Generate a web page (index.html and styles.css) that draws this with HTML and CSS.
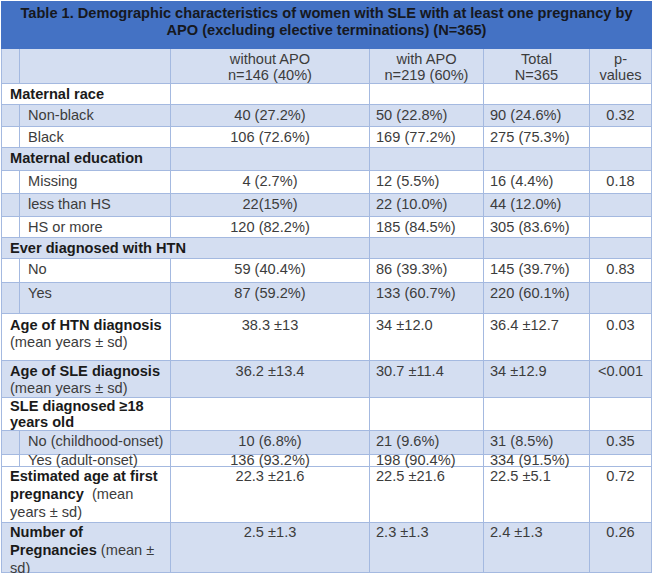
FILE: index.html
```html
<!DOCTYPE html>
<html>
<head>
<meta charset="utf-8">
<link rel="stylesheet" href="styles.css">
</head>
<body>
<div class="page">
<table class="demo">
  <colgroup>
    <col class="c-ind"><col class="c-lab"><col class="c-wo"><col class="c-with"><col class="c-tot"><col class="c-p">
  </colgroup>
  <tr class="r-title">
    <td colspan="6" class="title">Table 1. Demographic characteristics of women with SLE with at least one pregnancy by<br>APO (excluding elective terminations) (N=365)</td>
  </tr>
  <tr class="alt r-head">
    <td></td><td></td>
    <td class="ctr">without APO<br>n=146 (40%)</td>
    <td class="ctr">with APO<br>n=219 (60%)</td>
    <td class="ctr">Total<br>N=365</td>
    <td class="ctr">p-<br>values</td>
  </tr>
  <tr class="h21">
    <td colspan="2" class="cat">Maternal race</td><td></td><td></td><td></td><td></td>
  </tr>
  <tr class="alt h22">
    <td></td><td class="sub">Non-black</td><td class="ctr">40 (27.2%)</td><td class="lft">50 (22.8%)</td><td class="lft">90 (24.6%)</td><td class="ctr">0.32</td>
  </tr>
  <tr class="h21">
    <td></td><td class="sub">Black</td><td class="ctr">106 (72.6%)</td><td class="lft">169 (77.2%)</td><td class="lft">275 (75.3%)</td><td></td>
  </tr>
  <tr class="alt h23">
    <td colspan="2" class="cat">Maternal education</td><td></td><td></td><td></td><td></td>
  </tr>
  <tr class="h23">
    <td></td><td class="sub">Missing</td><td class="ctr">4 (2.7%)</td><td class="lft">12 (5.5%)</td><td class="lft">16 (4.4%)</td><td class="ctr">0.18</td>
  </tr>
  <tr class="alt h23">
    <td></td><td class="sub">less than HS</td><td class="ctr">22(15%)</td><td class="lft">22 (10.0%)</td><td class="lft">44 (12.0%)</td><td></td>
  </tr>
  <tr class="h21">
    <td></td><td class="sub">HS or more</td><td class="ctr">120 (82.2%)</td><td class="lft">185 (84.5%)</td><td class="lft">305 (83.6%)</td><td></td>
  </tr>
  <tr class="alt h21">
    <td colspan="3" class="cat">Ever diagnosed with HTN</td><td></td><td></td><td></td>
  </tr>
  <tr class="h24">
    <td></td><td class="sub">No</td><td class="ctr">59 (40.4%)</td><td class="lft">86 (39.3%)</td><td class="lft">145 (39.7%)</td><td class="ctr">0.83</td>
  </tr>
  <tr class="alt h31">
    <td></td><td class="sub">Yes</td><td class="ctr">87 (59.2%)</td><td class="lft">133 (60.7%)</td><td class="lft">220 (60.1%)</td><td></td>
  </tr>
  <tr class="h47 pad3">
    <td colspan="2" class="cat"><b>Age of HTN diagnosis</b><br><span class="norm">(mean years ± sd)</span></td><td class="ctr">38.3 ±13</td><td class="lft">34 ±12.0</td><td class="lft">36.4 ±12.7</td><td class="ctr">0.03</td>
  </tr>
  <tr class="alt h35">
    <td colspan="2" class="cat"><b>Age of SLE diagnosis</b><br><span class="norm">(mean years ± sd)</span></td><td class="ctr">36.2 ±13.4</td><td class="lft">30.7 ±11.4</td><td class="lft">34 ±12.9</td><td class="ctr">&lt;0.001</td>
  </tr>
  <tr class="h32 pad1">
    <td colspan="2" class="cat">SLE diagnosed ≥18<br>years old</td><td></td><td></td><td></td><td></td>
  </tr>
  <tr class="alt h24">
    <td></td><td class="sub">No (childhood-onset)</td><td class="ctr">10 (6.8%)</td><td class="lft">21 (9.6%)</td><td class="lft">31 (8.5%)</td><td class="ctr">0.35</td>
  </tr>
  <tr class="h11 tight">
    <td></td><td class="sub">Yes (adult-onset)</td><td class="ctr">136 (93.2%)</td><td class="lft">198 (90.4%)</td><td class="lft">334 (91.5%)</td><td></td>
  </tr>
  <tr class="h56 loose">
    <td colspan="2" class="cat"><b>Estimated age at first pregnancy</b> <span class="norm">&nbsp;(mean years ± sd)</span></td><td class="ctr">22.3 ±21.6</td><td class="lft">22.5 ±21.6</td><td class="lft">22.5 ±5.1</td><td class="ctr">0.72</td>
  </tr>
  <tr class="alt h50 mid">
    <td colspan="2" class="cat"><div class="ovf"><b>Number of Pregnancies</b> <span class="norm">(mean ± sd)</span></div></td><td class="ctr">2.5 ±1.3</td><td class="lft">2.3 ±1.3</td><td class="lft">2.4 ±1.3</td><td class="ctr">0.26</td>
  </tr>
</table>
</div>
</body>
</html>
```

FILE: styles.css
```css
html, body {
  margin: 0;
  padding: 0;
  background: #ffffff;
}

.page {
  padding: 1px 0 0 1px;
}

.demo {
  border-collapse: collapse;
  table-layout: fixed;
  width: 650px;
  font-family: "Liberation Sans", Arial, sans-serif;
  font-size: 14.6px;
  color: #3c3c3c;
}

.c-ind { width: 18px; }
.c-lab { width: 151px; }
.c-wo { width: 199px; }
.c-with { width: 114px; }
.c-tot { width: 106px; }
.c-p { width: 62px; }

.demo td {
  border: 1px solid #a4b9e0;
  padding: 2px 2px 0 8px;
  vertical-align: top;
  line-height: 17px;
  white-space: normal;
}

.demo tr { background: #ffffff; }
.demo tr.alt { background: #d4def1; }

.demo td.title {
  background: #4472c4;
  color: #161820;
  font-weight: bold;
  text-align: center;
  padding: 3px 4px 0 4px;
  line-height: 17px;
  border-color: #4472c4;
}

.r-title { height: 47px; }
.r-head { height: 34px; }
.r-head td { line-height: 16px; padding-top: 2px; }

.demo td.ctr { text-align: center; padding-left: 2px; padding-right: 2px; }
.demo td.lft { text-align: left; padding-left: 6px; }

.demo td.cat {
  font-weight: bold;
  color: #1a1a1a;
}
.demo td.cat .norm { font-weight: normal; color: #3c3c3c; }
.demo td.sub { padding-left: 8px; }

.h11 { height: 11px; }
.h21 { height: 21px; }
.h22 { height: 22px; }
.h23 { height: 23px; }
.h24 { height: 24px; }
.h31 { height: 31px; }
.h32 { height: 32px; }
.h35 { height: 35px; }
.h47 { height: 47px; }
.h50 { height: 50px; }
.h56 { height: 56px; }

.pad3 td { padding-top: 3px; }
.pad1 td { padding-top: 1px; line-height: 15.5px; }
.tight td { padding-top: 0; padding-bottom: 0; line-height: 11px; }
.loose td { padding-top: 0; line-height: 18px; }
.mid td { padding-top: 0; line-height: 18px; }
.mid .ovf { height: 48px; overflow: visible; }
```
